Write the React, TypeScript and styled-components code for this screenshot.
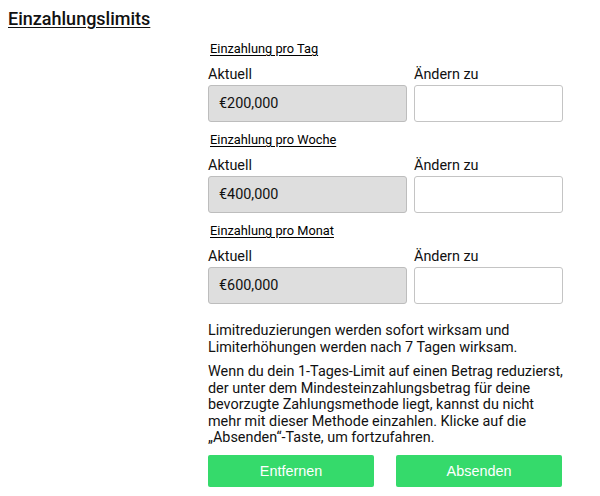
import React from "react"
import styled, { createGlobalStyle } from "styled-components"

const GlobalStyle = createGlobalStyle`
  html, body {
    margin: 0;
    padding: 0;
    background: #ffffff;
  }
  body {
    font-family: Roboto, "Liberation Sans", Arial, sans-serif;
    color: #111111;
  }
`

const Page = styled.div`
  padding: 8px 8px 0 8px;
`

const Title = styled.h1`
  margin: 0;
  font-size: 18px;
  font-weight: 500;
  line-height: 22px;
  text-decoration: underline;
  text-underline-offset: 2px;
`

const Form = styled.div`
  margin-left: 200px;
  width: 355px;
  padding-top: 11px;
`

const Section = styled.section`
  margin-bottom: 10px;
`

const SectionTitle = styled.h2`
  margin: 0 0 10px 2px;
  font-size: 12.8px;
  font-weight: 400;
  line-height: 16px;
  color: #000000;
  text-decoration: underline;
  text-underline-offset: 2px;
`

const Fields = styled.div`
  display: grid;
  grid-template-columns: 199px 149px;
  column-gap: 7px;
`

const Field = styled.div`
  display: flex;
  flex-direction: column;
`

const Label = styled.span`
  font-size: 14.4px;
  line-height: 16px;
  margin-bottom: 2px;
`

const Input = styled.div<{ $readOnly?: boolean }>`
  box-sizing: border-box;
  height: 37px;
  border-radius: 3px;
  border: 1px solid ${(p) => (p.$readOnly ? "#bdbdbd" : "#c4c4c4")};
  background: ${(p) => (p.$readOnly ? "#dedede" : "#ffffff")};
  font-size: 14.4px;
  display: flex;
  align-items: center;
  padding: 0 10px;
`

const Note = styled.p`
  margin: 18px 0 0 0;
  font-size: 14.4px;
  line-height: 17px;
`

const Note2 = styled(Note)`
  margin-top: 8px;
  line-height: 16.5px;
`

const Buttons = styled.div`
  display: grid;
  grid-template-columns: 166px 166px;
  column-gap: 22px;
  margin-top: 8px;
`

const Button = styled.button`
  height: 32px;
  border: none;
  border-radius: 2px;
  background: #35da6b;
  color: #ffffff;
  font-family: "Liberation Sans", Arial, sans-serif;
  font-size: 14.4px;
  cursor: pointer;
`

const limits = [
  { title: "Einzahlung pro Tag", value: "€200,000" },
  { title: "Einzahlung pro Woche", value: "€400,000" },
  { title: "Einzahlung pro Monat", value: "€600,000" },
]

export default function App() {
  return (
    <Page>
      <GlobalStyle />
      <Title>Einzahlungslimits</Title>
      <Form>
        {limits.map((l) => (
          <Section key={l.title}>
            <SectionTitle>{l.title}</SectionTitle>
            <Fields>
              <Field>
                <Label>Aktuell</Label>
                <Input $readOnly>{l.value}</Input>
              </Field>
              <Field>
                <Label>Ändern zu</Label>
                <Input />
              </Field>
            </Fields>
          </Section>
        ))}
        <Note>
          Limitreduzierungen werden sofort wirksam und Limiterhöhungen werden
          nach 7 Tagen wirksam.
        </Note>
        <Note2>
          Wenn du dein 1-Tages-Limit auf einen Betrag reduzierst, der unter dem
          Mindesteinzahlungsbetrag für deine bevorzugte Zahlungsmethode liegt,
          kannst du nicht mehr mit dieser Methode einzahlen. Klicke auf die
          „Absenden“-Taste, um fortzufahren.
        </Note2>
        <Buttons>
          <Button>Entfernen</Button>
          <Button>Absenden</Button>
        </Buttons>
      </Form>
    </Page>
  )
}
